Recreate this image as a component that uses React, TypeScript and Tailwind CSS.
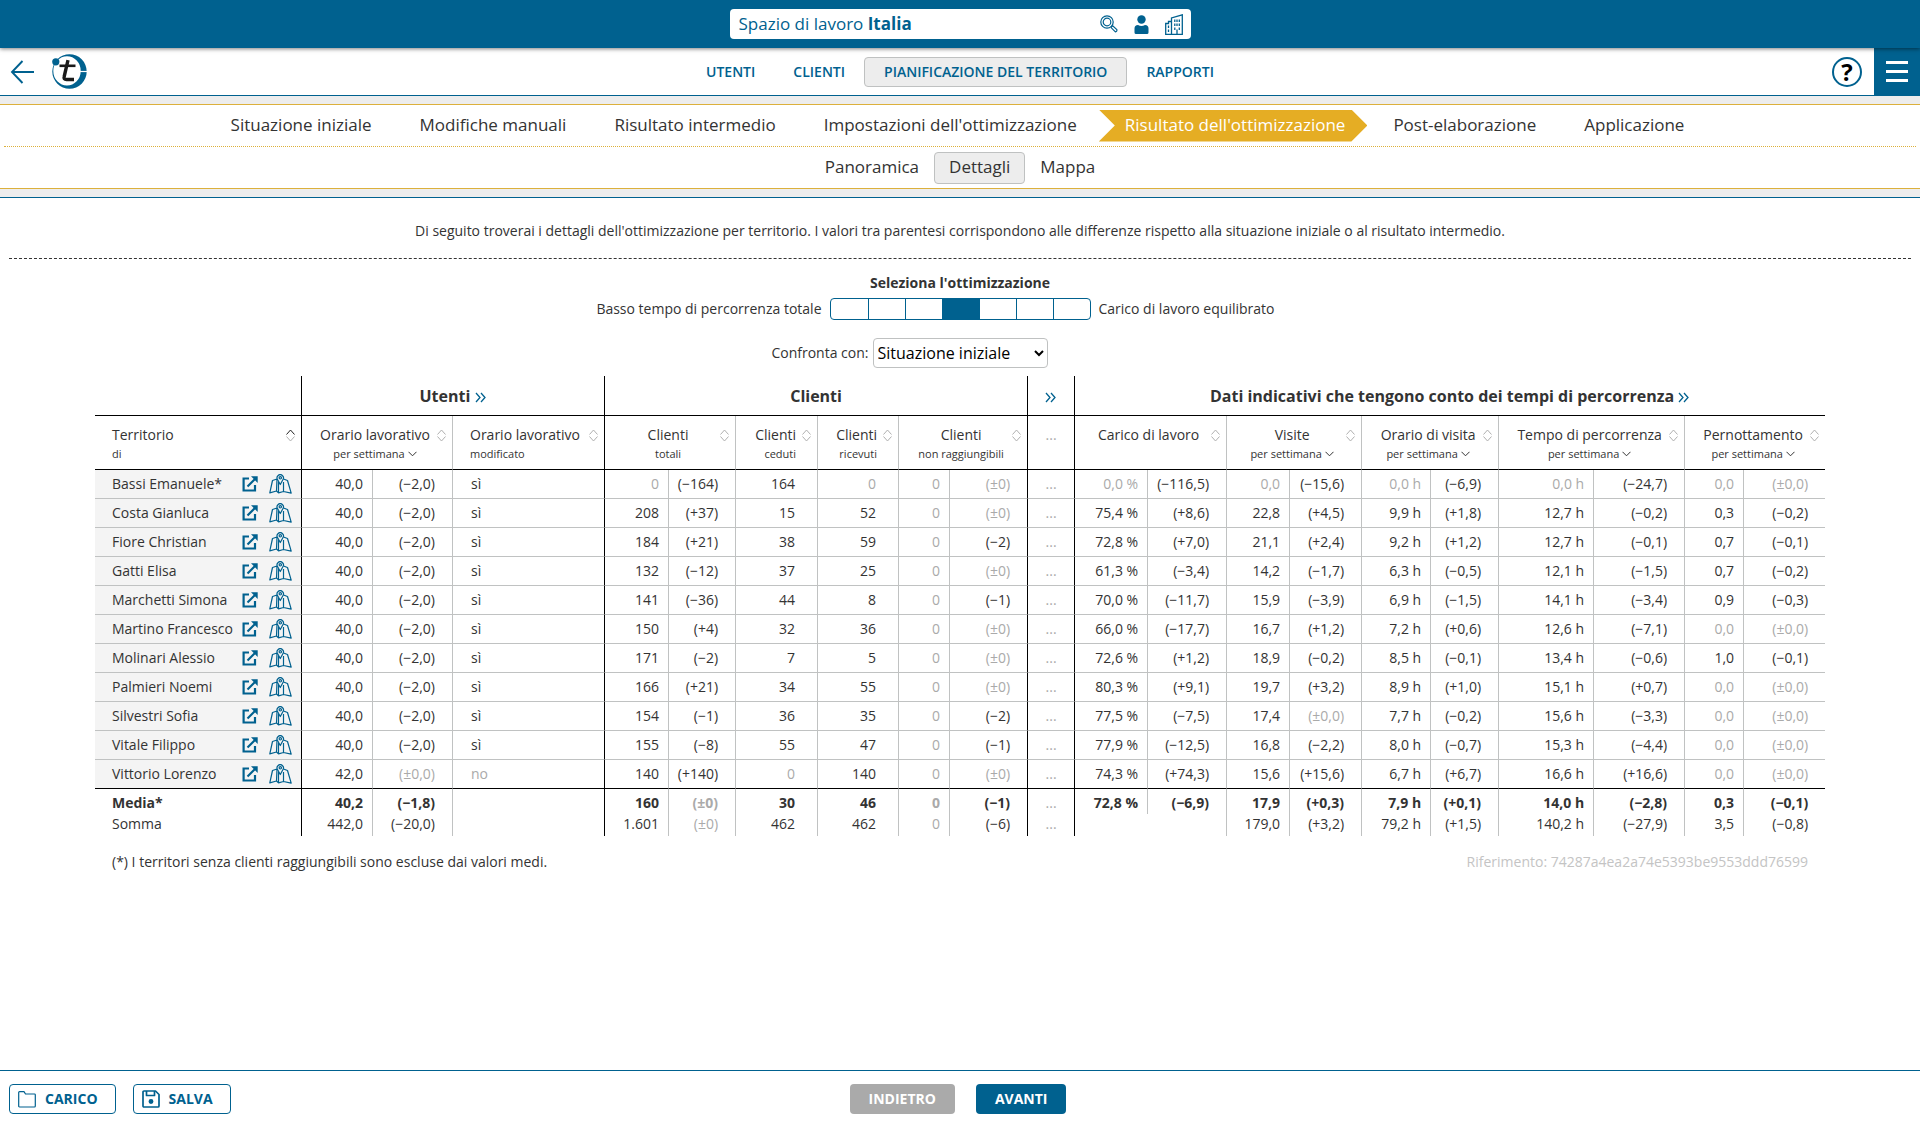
import React, { useState } from 'react'

const mainNav = ['UTENTI', 'CLIENTI', 'PIANIFICAZIONE DEL TERRITORIO', 'RAPPORTI']

const steps = [
    'Situazione iniziale',
    'Modifiche manuali',
    'Risultato intermedio',
    "Impostazioni dell'ottimizzazione",
    "Risultato dell'ottimizzazione",
    'Post-elaborazione',
    'Applicazione',
]

const tabs = ['Panoramica', 'Dettagli', 'Mappa']

// kind: v = value, d = difference, s = single value, t = text, e = collapsed group
const columns = [
    { width: 'w-[71px]', kind: 'v' },
    { width: 'w-[80px]', kind: 'd' },
    { width: 'w-[152px]', kind: 't', last: true },
    { width: 'w-[64px]', kind: 'v' },
    { width: 'w-[67px]', kind: 'd' },
    { width: 'w-[82px]', kind: 's' },
    { width: 'w-[81px]', kind: 's' },
    { width: 'w-[51px]', kind: 'v' },
    { width: 'w-[78px]', kind: 'd', last: true },
    { width: 'w-[47px]', kind: 'e', last: true },
    { width: 'w-[73px]', kind: 'v' },
    { width: 'w-[79px]', kind: 'd' },
    { width: 'w-[63px]', kind: 'v' },
    { width: 'w-[72px]', kind: 'd' },
    { width: 'w-[69px]', kind: 'v' },
    { width: 'w-[68px]', kind: 'd' },
    { width: 'w-[95px]', kind: 'v' },
    { width: 'w-[91px]', kind: 'd' },
    { width: 'w-[59px]', kind: 'v' },
    { width: 'w-[81px]', kind: 'd', end: true },
]

const headers = [
    { title: 'Orario lavorativo', sub: 'per settimana', menu: true, span: 2, align: 'text-center' },
    { title: 'Orario lavorativo', sub: 'modificato', span: 1, align: 'text-left', last: true },
    { title: 'Clienti', sub: 'totali', span: 2, align: 'text-center' },
    { title: 'Clienti', sub: 'ceduti', span: 1, align: 'text-right' },
    { title: 'Clienti', sub: 'ricevuti', span: 1, align: 'text-right' },
    { title: 'Clienti', sub: 'non raggiungibili', span: 2, align: 'text-center', last: true },
    { title: '...', sub: '', span: 1, align: 'text-center', last: true },
    { title: 'Carico di lavoro', sub: '', span: 2, align: 'text-center' },
    { title: 'Visite', sub: 'per settimana', menu: true, span: 2, align: 'text-center' },
    { title: 'Orario di visita', sub: 'per settimana', menu: true, span: 2, align: 'text-center' },
    { title: 'Tempo di percorrenza', sub: 'per settimana', menu: true, span: 2, align: 'text-center' },
    { title: 'Pernottamento', sub: 'per settimana', menu: true, span: 2, align: 'text-center', end: true },
]

const rows = [
    ['Bassi Emanuele*', '40,0', '(−2,0)', 'sì', '0', '(−164)', '164', '0', '0', '(±0)', '...', '0,0 %', '(−116,5)', '0,0', '(−15,6)', '0,0 h', '(−6,9)', '0,0 h', '(−24,7)', '0,0', '(±0,0)'],
    ['Costa Gianluca', '40,0', '(−2,0)', 'sì', '208', '(+37)', '15', '52', '0', '(±0)', '...', '75,4 %', '(+8,6)', '22,8', '(+4,5)', '9,9 h', '(+1,8)', '12,7 h', '(−0,2)', '0,3', '(−0,2)'],
    ['Fiore Christian', '40,0', '(−2,0)', 'sì', '184', '(+21)', '38', '59', '0', '(−2)', '...', '72,8 %', '(+7,0)', '21,1', '(+2,4)', '9,2 h', '(+1,2)', '12,7 h', '(−0,1)', '0,7', '(−0,1)'],
    ['Gatti Elisa', '40,0', '(−2,0)', 'sì', '132', '(−12)', '37', '25', '0', '(±0)', '...', '61,3 %', '(−3,4)', '14,2', '(−1,7)', '6,3 h', '(−0,5)', '12,1 h', '(−1,5)', '0,7', '(−0,2)'],
    ['Marchetti Simona', '40,0', '(−2,0)', 'sì', '141', '(−36)', '44', '8', '0', '(−1)', '...', '70,0 %', '(−11,7)', '15,9', '(−3,9)', '6,9 h', '(−1,5)', '14,1 h', '(−3,4)', '0,9', '(−0,3)'],
    ['Martino Francesco', '40,0', '(−2,0)', 'sì', '150', '(+4)', '32', '36', '0', '(±0)', '...', '66,0 %', '(−17,7)', '16,7', '(+1,2)', '7,2 h', '(+0,6)', '12,6 h', '(−7,1)', '0,0', '(±0,0)'],
    ['Molinari Alessio', '40,0', '(−2,0)', 'sì', '171', '(−2)', '7', '5', '0', '(±0)', '...', '72,6 %', '(+1,2)', '18,9', '(−0,2)', '8,5 h', '(−0,1)', '13,4 h', '(−0,6)', '1,0', '(−0,1)'],
    ['Palmieri Noemi', '40,0', '(−2,0)', 'sì', '166', '(+21)', '34', '55', '0', '(±0)', '...', '80,3 %', '(+9,1)', '19,7', '(+3,2)', '8,9 h', '(+1,0)', '15,1 h', '(+0,7)', '0,0', '(±0,0)'],
    ['Silvestri Sofia', '40,0', '(−2,0)', 'sì', '154', '(−1)', '36', '35', '0', '(−2)', '...', '77,5 %', '(−7,5)', '17,4', '(±0,0)', '7,7 h', '(−0,2)', '15,6 h', '(−3,3)', '0,0', '(±0,0)'],
    ['Vitale Filippo', '40,0', '(−2,0)', 'sì', '155', '(−8)', '55', '47', '0', '(−1)', '...', '77,9 %', '(−12,5)', '16,8', '(−2,2)', '8,0 h', '(−0,7)', '15,3 h', '(−4,4)', '0,0', '(±0,0)'],
    ['Vittorio Lorenzo', '42,0', '(±0,0)', 'no', '140', '(+140)', '0', '140', '0', '(±0)', '...', '74,3 %', '(+74,3)', '15,6', '(+15,6)', '6,7 h', '(+6,7)', '16,6 h', '(+16,6)', '0,0', '(±0,0)'],
]

const mean = ['Media*', '40,2', '(−1,8)', '', '160', '(±0)', '30', '46', '0', '(−1)', '...', '72,8 %', '(−6,9)', '17,9', '(+0,3)', '7,9 h', '(+0,1)', '14,0 h', '(−2,8)', '0,3', '(−0,1)']
const sum = ['Somma', '442,0', '(−20,0)', '', '1.601', '(±0)', '462', '462', '0', '(−6)', '...', '', '', '179,0', '(+3,2)', '79,2 h', '(+1,5)', '140,2 h', '(−27,9)', '3,5', '(−0,8)']

const isMuted = (value: string) => /^(0$|0,0|\(±|no$|\.\.\.)/.test(value)

const cellPadding: Record<string, string> = {
    v: 'pr-[9px] text-right',
    d: 'pr-[17px] text-right',
    s: 'pr-[22px] text-right',
    t: 'pl-[18px] text-left',
    e: 'text-center',
}

const cellBorder = (col: { last?: boolean; end?: boolean }) => {
    if (col.end) return ''
    return col.last ? 'border-r border-r-black' : 'border-r border-r-[#c0c2c2]'
}

const Logo = () => (
    <svg width="35" height="35" viewBox="0 0 35 35" aria-hidden="true">
        <path
            d="M17.500 .3A17.200 17.200 0 1 1 17.500 34.700A17.200 17.200 0 1 1 17.500 .3ZM15 2.300A13.700 14.600 0 1 0 15 31.500A13.700 14.600 0 1 0 15 2.300Z"
            fill="#00618f"
            fillRule="evenodd"
        />
        <path d="M27 17.500H35" stroke="#fff" strokeWidth="1.200" />
        <circle cx="3.800" cy="7.800" r="3.600" fill="#00618f" />
        <path d="M16 6.200L12.200 22.500Q11.300 25.500 14.500 25.500H22" fill="none" stroke="#1a1a1a" strokeWidth="3.400" />
        <path d="M7.500 11.800H23.500" stroke="#1a1a1a" strokeWidth="2.600" />
    </svg>
)

const BackArrow = () => (
    <svg width="24" height="24" viewBox="0 0 24 24" fill="none" stroke="#00618f" strokeWidth="1.900" aria-hidden="true">
        <path d="M12.500 1L2 12L12.500 23M2 12H24" />
    </svg>
)

const SearchIcon = () => (
    <svg width="18" height="18" viewBox="0 0 18 18" fill="none" stroke="#00618f" strokeWidth="1.200" aria-hidden="true">
        <circle cx="7" cy="7" r="6.200" />
        <circle cx="7" cy="7" r="3.800" />
        <path d="M11.300 12L12.700 10.700L16.800 14.500Q17.400 16.400 15.400 16.900L11.300 12.800Z" />
    </svg>
)

const PersonIcon = () => (
    <svg width="15" height="19" viewBox="0 0 15 19" fill="#00618f" aria-hidden="true">
        <circle cx="7.500" cy="4.500" r="4.200" />
        <path d="M.5 17.500V13.500Q.5 10 4 10Q7.500 12 11 10Q14.500 10 14.500 13.500V17.500Q14.500 19 13 19H2Q.5 19 .5 17.500Z" />
    </svg>
)

const BuildingIcon = () => (
    <svg width="18" height="21" viewBox="0 0 18 21" fill="none" stroke="#00618f" strokeWidth="1.300" aria-hidden="true">
        <path d="M6.500 20.300V4L17.300 .8V20.300ZM6.500 7.500H3.500V9.500H.7V20.300H6.500" />
        <path d="M3.500 11.500V14M3.500 15.500V18M9.800 5.500V8M12 5.500V8M14.300 5.500V8M9.800 9.500V12M12 9.500V12M14.300 9.500V12M9.800 13.500V16M14.300 13.500V16M12 15.500V20" />
    </svg>
)

const OpenIcon = () => (
    <svg width="16" height="16" viewBox="0 0 16 16" fill="none" stroke="#00618f" strokeWidth="2.200" aria-hidden="true">
        <path d="M7 2.500H1.600V14.500H13V9" />
        <path d="M5.500 10.500L13 3" />
        <path d="M9 .3H15.700V7Z" fill="#00618f" stroke="none" />
    </svg>
)

const MapIcon = () => (
    <svg width="23" height="20" viewBox="0 0 23 20" fill="none" stroke="#00618f" strokeWidth="1.200" strokeLinejoin="round" aria-hidden="true">
        <path d="M8 5L3.500 6.500L.8 18.800L7.500 17L8 5M7.500 17L9.500 18.800L14.500 17.500V8M14.500 17.500L22.200 19.200L18.500 6.500L14.500 5" />
        <path d="M11.300 10.500L8.500 5.500A3.200 3.200 0 1 1 14 5.500ZM9.500 18.800V8" />
        <circle cx="11.300" cy="3.800" r="1.200" />
    </svg>
)

const SortIcon = ({ active = false }: { active?: boolean }) => (
    <svg width="9" height="13" viewBox="0 0 9 13" fill="none" aria-hidden="true">
        <path d="M.5 5.500L4.500 1L8.500 5.500" stroke={active ? '#222' : '#b0b0b0'} />
        <path d="M.5 7.500L4.500 12L8.500 7.500" stroke="#b0b0b0" />
    </svg>
)

const CaretIcon = () => (
    <svg width="9" height="6" viewBox="0 0 9 6" fill="none" stroke="#333" aria-hidden="true">
        <path d="M.5 .8L4.500 4.800L8.500 .8" />
    </svg>
)

const MoreButton = () => (
    <button type="button" aria-label="Mostra di più" className="align-middle">
        <svg width="12" height="11" viewBox="0 0 12 11" fill="none" stroke="#00618f" strokeWidth="1.300" aria-hidden="true">
            <path d="M1 1L5 5.500L1 10M6 1L10 5.500L6 10" />
        </svg>
    </button>
)

const FolderIcon = () => (
    <svg width="18" height="17" viewBox="0 0 18 17" fill="none" stroke="#00618f" strokeWidth="1.200" strokeLinejoin="round" aria-hidden="true">
        <path d="M.7 15V1.500Q.7 .7 1.500 .7H6L7.500 3H16.500Q17.300 3 17.300 3.800V15Q17.300 16 16.500 16H1.500Q.7 16 .7 15Z" />
    </svg>
)

const SaveIcon = () => (
    <svg width="18" height="18" viewBox="0 0 18 18" fill="none" stroke="#00618f" strokeWidth="1.700" strokeLinejoin="round" aria-hidden="true">
        <path d="M1 16V2Q1 1 2 1H13.500L17 4.500V16Q17 17 16 17H2Q1 17 1 16Z" />
        <path d="M4.500 1V5.500H12.500V1" />
        <circle cx="9" cy="11.500" r="1.600" fill="#00618f" />
    </svg>
)

const TopBar = () => (
    <div className="relative z-10 flex h-12 items-center justify-center bg-[#00618f] shadow-[0_1px_4px_rgba(0,0,0,0.5)]">
        <div className="flex h-[30px] w-[461px] items-center rounded bg-white pr-2 pl-[9px] text-[#00618f]">
            <p className="flex-1 text-[17px]">Spazio di lavoro <strong>Italia</strong></p>
            <div className="flex items-center gap-4">
                <button type="button" aria-label="Cerca"><SearchIcon /></button>
                <button type="button" aria-label="Utente"><PersonIcon /></button>
                <button type="button" aria-label="Azienda"><BuildingIcon /></button>
            </div>
        </div>
    </div>
)

const Header = () => (
    <header className="grid h-12 grid-cols-[1fr_auto_1fr] items-center border-b border-[#00618f]">
        <div className="flex items-center gap-[18px] pl-[10px]">
            <a href="#indietro" aria-label="Indietro"><BackArrow /></a>
            <a href="#home" aria-label="Home"><Logo /></a>
        </div>
        <nav className="flex text-sm font-semibold text-[#00618f]">
            {mainNav.map((item, i) => (
                <a
                    key={item}
                    href="#"
                    className={i === 2
                        ? 'flex h-[30px] items-center rounded border border-[#bfc1c1] bg-[#ededed] px-[19px]'
                        : 'flex h-[30px] items-center border border-transparent px-[18px]'}
                >
                    {item}
                </a>
            ))}
        </nav>
        <div className="flex h-full items-center justify-end gap-3">
            <button type="button" aria-label="Aiuto" className="flex h-[30px] w-[30px] items-center justify-center rounded-full border-2 border-[#00618f] text-2xl font-bold text-black">?</button>
            <button type="button" aria-label="Menu" className="flex h-full w-[46px] flex-col items-center justify-center gap-[6px] bg-[#00618f]">
                <span className="h-[3px] w-[22px] bg-white"></span>
                <span className="h-[3px] w-[22px] bg-white"></span>
                <span className="h-[3px] w-[22px] bg-white"></span>
            </button>
        </div>
    </header>
)

const StepBar = () => (
    <div className="border-b border-[#00618f] bg-[#ededed] py-2">
        <div className="border-y border-[#dcb03c] bg-white px-1 text-[17px]">
            <nav className="flex h-[42px] items-center justify-center border-b border-dotted border-[#dcb03c] pr-[9px]">
                {steps.map((step, i) => (
                    <a
                        key={step}
                        href="#"
                        className={i === 4
                            ? 'flex h-8 items-center bg-[#e5ad24] pr-[22px] pl-[26px] text-white [clip-path:polygon(0_0,calc(100%-16px)_0,100%_50%,calc(100%-16px)_100%,0_100%,16px_50%)]'
                            : 'flex h-8 items-center pr-[22px] pl-[26px]'}
                    >
                        {step}
                    </a>
                ))}
            </nav>
            <nav className="flex h-[41px] items-center justify-center">
                {tabs.map((tab, i) => (
                    <a
                        key={tab}
                        href="#"
                        className={i === 1
                            ? 'flex h-8 items-center rounded border border-[#bfc1c1] bg-[#ededed] px-[14px]'
                            : 'flex h-8 items-center border border-transparent px-[14px]'}
                    >
                        {tab}
                    </a>
                ))}
            </nav>
        </div>
    </div>
)

const OptimizationPicker = () => {
    const [level, setLevel] = useState(3)

    return (
        <fieldset className="mt-[14px]">
            <legend className="w-full text-center font-bold">Seleziona l'ottimizzazione</legend>
            <div className="mt-[5px] grid grid-cols-[1fr_auto_1fr] items-center gap-2">
                <span className="text-right">Basso tempo di percorrenza totale</span>
                <div className="flex h-[22px] overflow-hidden rounded border border-[#00618f]">
                    {[0, 1, 2, 3, 4, 5, 6].map((i) => (
                        <input
                            key={i}
                            type="radio"
                            name="level"
                            aria-label={`Livello ${i + 1}`}
                            checked={level === i}
                            onChange={() => setLevel(i)}
                            className="w-[37px] appearance-none border-l border-[#00618f] first:border-l-0 checked:bg-[#00618f]"
                        />
                    ))}
                </div>
                <span>Carico di lavoro equilibrato</span>
            </div>
        </fieldset>
    )
}

const CompareSelect = () => (
    <div className="mt-[18px] grid grid-cols-[1fr_auto_1fr] items-center gap-1">
        <label htmlFor="compare" className="text-right">Confronta con:</label>
        <select id="compare" className="h-[30px] w-[175px] rounded border border-[#bfc1c1] bg-white text-base text-black">
            <option>Situazione iniziale</option>
            <option>Risultato intermedio</option>
        </select>
    </div>
)

const DataTable = () => (
    <table className="w-full table-fixed border-separate border-spacing-0">
        <colgroup>
            <col className="w-[207px]" />
            {columns.map((col, i) => <col key={i} className={col.width} />)}
        </colgroup>
        <thead>
            <tr className="h-10 text-base">
                <td className="border-r border-b border-black"></td>
                <th colSpan={3} className="border-r border-b border-black">Utenti <MoreButton /></th>
                <th colSpan={6} className="border-r border-b border-black">Clienti</th>
                <th className="border-r border-b border-black"><MoreButton /></th>
                <th colSpan={10} className="border-b border-black">Dati indicativi che tengono conto dei tempi di percorrenza <MoreButton /></th>
            </tr>
            <tr className="h-[54px]">
                <th className="border-r border-b border-black p-0 text-left align-top font-normal">
                    <div className="flex pt-[9px] pr-[6px] pl-[17px]">
                        <div className="flex-1">
                            <div className="leading-5">Territorio</div>
                            <div className="text-[11px] leading-[18px]">di</div>
                        </div>
                        <button type="button" aria-label="Ordina" className="flex h-5 items-center"><SortIcon active /></button>
                    </div>
                </th>
                {headers.map((h, i) => (
                    <th key={i} colSpan={h.span} className={`border-b border-b-black p-0 align-top font-normal ${h.align} ${cellBorder(h)}`}>
                        {h.title === '...' ? (
                            <div className="pt-[9px] leading-5 text-[#aaa]">...</div>
                        ) : (
                            <div className="flex gap-[6px] pt-[9px] pr-[6px] pl-[17px] whitespace-nowrap">
                                <div className="flex min-w-0 flex-1 flex-col">
                                    <div className="leading-5">{h.title}</div>
                                    <div className="text-[11px] leading-[18px]">
                                        {h.menu ? (
                                            <button type="button" className="inline-flex items-center gap-[3px]">{h.sub}<CaretIcon /></button>
                                        ) : h.sub}
                                    </div>
                                </div>
                                <button type="button" aria-label="Ordina" className="flex h-5 items-center"><SortIcon /></button>
                            </div>
                        )}
                    </th>
                ))}
            </tr>
        </thead>
        <tbody>
            {rows.map(([name, ...values], r) => {
                const line = r === rows.length - 1 ? 'border-b border-b-black' : 'border-b border-b-[#c0c2c2]'
                return (
                    <tr key={name} className="h-[29px]">
                        <th className={`border-r border-r-black bg-[#f4f4f4] p-0 text-left font-normal ${line}`}>
                            <div className="flex items-center pr-[9px] pl-[17px] whitespace-nowrap">
                                <span className="flex-1">{name}</span>
                                <button type="button" aria-label="Apri" className="mr-[11px]"><OpenIcon /></button>
                                <button type="button" aria-label="Mappa"><MapIcon /></button>
                            </div>
                        </th>
                        {values.map((value, i) => (
                            <td key={i} className={`p-0 whitespace-nowrap ${cellPadding[columns[i].kind]} ${cellBorder(columns[i])} ${line} ${isMuted(value) ? 'text-[#aaa]' : ''}`}>{value}</td>
                        ))}
                    </tr>
                )
            })}
        </tbody>
        <tfoot>
            {[mean, sum].map(([name, ...values], r) => (
                <tr key={name} className={r === 0 ? 'h-[25px] font-bold' : 'h-[22px] align-top'}>
                    <th className={`border-r border-black p-0 pl-[17px] text-left ${r === 0 ? 'pt-[2px]' : 'font-normal'}`}>{name}</th>
                    {values.map((value, i) => (
                        <td
                            key={i}
                            className={`p-0 whitespace-nowrap ${r === 0 ? 'pt-[2px]' : ''} ${cellPadding[columns[i].kind]} ${r === 1 && i === 10 ? '' : cellBorder(columns[i])} ${value === '...' ? 'font-normal' : ''} ${isMuted(value) ? 'text-[#aaa]' : ''}`}
                        >
                            {value}
                        </td>
                    ))}
                </tr>
            ))}
        </tfoot>
    </table>
)

const Footer = () => (
    <footer className="mt-auto grid h-[70px] grid-cols-[1fr_auto_1fr] items-start border-t border-[#00618f] px-[9px] pt-[13px] text-sm font-bold">
        <div className="flex gap-[17px] text-[#00618f]">
            <button type="button" className="flex h-[30px] items-center gap-[9px] rounded border border-[#00618f] pr-[17px] pl-2"><FolderIcon />CARICO</button>
            <button type="button" className="flex h-[30px] items-center gap-[9px] rounded border border-[#00618f] pr-[17px] pl-2"><SaveIcon />SALVA</button>
        </div>
        <div className="flex gap-[21px] pr-1 text-white">
            <button type="button" className="h-[30px] rounded bg-[#aaa] px-[19px]">INDIETRO</button>
            <button type="button" className="h-[30px] rounded bg-[#00618f] px-[19px]">AVANTI</button>
        </div>
    </footer>
)

const App = () => {
    return (
        <div className="flex min-h-screen flex-col bg-white font-['Open_Sans',sans-serif] text-sm text-[#333]">
            <TopBar />
            <Header />
            <StepBar />
            <main>
                <div className="mx-[9px] border-b border-dashed border-[#333] pt-[23px] pb-[17px]">
                    <p className="text-center">Di seguito troverai i dettagli dell'ottimizzazione per territorio. I valori tra parentesi corrispondono alle differenze rispetto alla situazione iniziale o al risultato intermedio.</p>
                </div>
                <OptimizationPicker />
                <CompareSelect />
                <div className="px-[95px] pt-2">
                    <DataTable />
                    <div className="flex justify-between px-[17px] pt-4">
                        <p>(*) I territori senza clienti raggiungibili sono escluse dai valori medi.</p>
                        <p className="text-[#c4c4c4]">Riferimento: 74287a4ea2a74e5393be9553ddd76599</p>
                    </div>
                </div>
            </main>
            <Footer />
        </div>
    )
}

export default App
